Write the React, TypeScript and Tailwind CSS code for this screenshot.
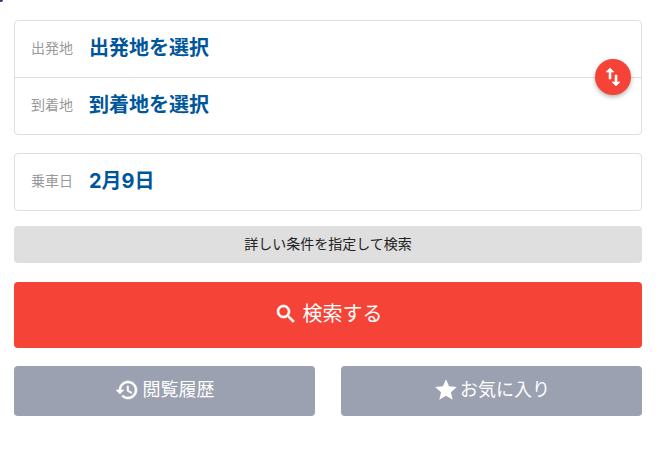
import { MdStar } from "react-icons/md";

const font = "font-['Inter','Noto_Sans_CJK_JP',sans-serif]";

const searchPath =
  "M15.5 14h-.79l-.28-.27C15.41 12.59 16 11.11 16 9.5 16 5.91 13.09 3 9.5 3S3 5.91 3 9.5 5.91 16 9.5 16c1.61 0 3.09-.59 4.23-1.57l.27.28v.79l5 4.99L20.49 19l-4.99-5zm-6 0C7.01 14 5 11.99 5 9.5S7.01 5 9.5 5 14 7.01 14 9.5 11.99 14 9.5 14z";
const historyPath =
  "M13 3c-4.97 0-9 4.03-9 9H1l3.89 3.89.07.14L9 12H6c0-3.87 3.13-7 7-7s7 3.13 7 7-3.13 7-7 7c-1.93 0-3.68-.79-4.94-2.06l-1.42 1.42C8.27 19.99 10.51 21 13 21c4.97 0 9-4.03 9-9s-4.03-9-9-9zm-1 5v5l4.28 2.54.72-1.21-3.5-2.08V8H12z";
const swapPath = "M16 17.01V10h-2v7.01h-3L15 21l4-3.99h-3zM9 3L5 6.99h3V14h2V6.99h3L9 3z";

function Icon({ d, size = 24 }: { d: string; size?: number }) {
  return (
    <svg viewBox="0 0 24 24" width={size} height={size} className="shrink-0 fill-white stroke-white stroke-[0.6]">
      <path d={d} />
    </svg>
  );
}

function Row({ label, value, border }: { label: string; value: string; border?: boolean }) {
  return (
    <div className={`flex items-center pb-0.5 pl-4 ${border ? "h-[57px] border-b border-[#dfdfdf]" : "h-14"}`}>
      <span className="w-[58px] text-sm text-[#999]">{label}</span>
      <span className="text-xl font-bold text-[#00569b]">{value}</span>
    </div>
  );
}

export default function App() {
  return (
    <div className={`relative h-[464px] w-[659px] overflow-hidden bg-white pl-[14px] pr-[17px] pt-5 ${font}`}>
      <div className="absolute left-0 top-0 h-[2px] w-[3px] rounded-br-full bg-[#3b3b7a]" />

      <div className="relative rounded border border-[#dfdfdf]">
        <Row label="出発地" value="出発地を選択" border />
        <Row label="到着地" value="到着地を選択" />
        <button className="absolute right-[10px] top-[38px] flex h-9 w-9 items-center justify-center rounded-full bg-[#f64337] text-white shadow-[0_2px_4px_rgba(0,0,0,0.3)]">
          <Icon d={swapPath} />
        </button>
      </div>

      <div className="mt-[18px] rounded border border-[#dfdfdf]">
        <Row label="乗車日" value="2月9日" />
      </div>

      <div className="mt-[15px] flex h-[37px] items-center justify-center rounded-sm bg-[#dfdfdf] pb-0.5 text-sm text-[#222]">
        詳しい条件を指定して検索
      </div>

      <button className="mt-[19px] flex h-[66px] w-full items-center justify-center gap-[5px] rounded-sm bg-[#f64337] pb-0.5 text-xl text-white">
        <Icon d={searchPath} />
        検索する
      </button>

      <div className="mt-[18px] flex gap-[26px]">
        <button className="flex h-[50px] flex-1 items-center justify-center gap-1 rounded bg-[#9ba1b0] pb-0.5 text-lg text-white">
          <Icon d={historyPath} />
          閲覧履歴
        </button>
        <button className="flex h-[50px] flex-1 items-center justify-center gap-px rounded bg-[#9ba1b0] pb-0.5 text-lg text-white">
          <MdStar size={26} />
          お気に入り
        </button>
      </div>
    </div>
  );
}
